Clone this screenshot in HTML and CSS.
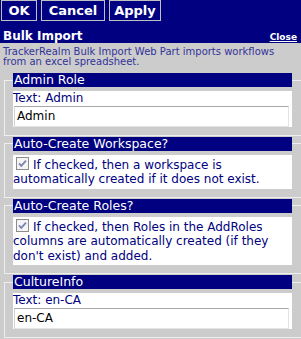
FILE: index.html
```html
<!DOCTYPE html>
<html lang="en">
<head>
  <meta charset="UTF-8">
  <meta name="viewport" content="width=device-width, initial-scale=1.0">
  <title>Bulk Import</title>
  <link rel="stylesheet" href="styles.css">
</head>
<body>
  <div class="web-part">
    <div class="header">
      <div class="toolbar">
        <button class="btn btn-ok">OK</button>
        <button class="btn btn-cancel">Cancel</button>
        <button class="btn btn-apply">Apply</button>
      </div>
      <div class="titlebar">
        <span class="title">Bulk Import</span>
        <a class="close" href="#">Close</a>
      </div>
    </div>

    <p class="desc">TrackerRealm Bulk Import Web Part imports workflows from an excel spreadsheet.</p>

    <fieldset class="prop">
      <legend>Admin Role</legend>
      <div class="prop-body">
        <div class="prop-label">Text: Admin</div>
        <input class="prop-input" type="text" value="Admin">
      </div>
    </fieldset>

    <fieldset class="prop">
      <legend>Auto-Create Workspace?</legend>
      <div class="prop-body prop-check">
        <svg class="check" width="13" height="13" viewBox="0 0 13 13"><rect x="0.5" y="0.5" width="12" height="12" fill="#f4f4f4" stroke="#8c8c8c"/><path d="M3 6.3 L5.3 8.8 L10 3.6" fill="none" stroke="#7b84b4" stroke-width="1.8"/></svg>If checked, then a workspace is automatically created if it does not exist.
      </div>
    </fieldset>

    <fieldset class="prop">
      <legend>Auto-Create Roles?</legend>
      <div class="prop-body prop-check">
        <svg class="check" width="13" height="13" viewBox="0 0 13 13"><rect x="0.5" y="0.5" width="12" height="12" fill="#f4f4f4" stroke="#8c8c8c"/><path d="M3 6.3 L5.3 8.8 L10 3.6" fill="none" stroke="#7b84b4" stroke-width="1.8"/></svg>If checked, then Roles in the AddRoles columns are automatically created (if they don't exist) and added.
      </div>
    </fieldset>

    <fieldset class="prop">
      <legend>CultureInfo</legend>
      <div class="prop-body">
        <div class="prop-label">Text: en-CA</div>
        <input class="prop-input" type="text" value="en-CA">
      </div>
    </fieldset>
  </div>
</body>
</html>
```

FILE: styles.css
```css
body {
  margin: 0;
  padding: 0;
  background: #cccccc;
  font-family: "DejaVu Sans", Verdana, sans-serif;
  overflow: hidden;
}

.header {
  background: #000080;
  height: 43px;
}

.toolbar {
  display: flex;
  gap: 4px;
  padding-left: 1px;
}

.btn {
  height: 21px;
  padding: 0;
  border: 1px solid #c0c0c0;
  background: #000080;
  color: white;
  font-family: "DejaVu Sans", Verdana, sans-serif;
  font-size: 13px;
  font-weight: bold;
}

.btn-ok { width: 36px; }
.btn-cancel { width: 64px; }
.btn-apply { width: 52px; }

.titlebar {
  display: flex;
  justify-content: space-between;
  align-items: baseline;
  padding: 8px 4px 0 3px;
  line-height: 14px;
}

.title {
  color: white;
  font-size: 12px;
  font-weight: bold;
}

.close {
  color: white;
  font-size: 9px;
  font-weight: bold;
}

.desc {
  margin: 0;
  padding: 4px 3px 0;
  font-size: 10px;
  line-height: 10px;
  color: #333399;
  height: 26px;
}

.prop {
  margin: 0 2px 1px 4px;
  padding: 0 10px 8px 8px;
  border: 1px solid #eeeeee;
}

.prop legend {
  width: 279px;
  height: 14px;
  box-sizing: border-box;
  padding: 0 0 0 1px;
  background: #000080;
  color: white;
  font-size: 12.5px;
  line-height: 14px;
}

.prop-body {
  margin-top: 4px;
  background: white;
  color: #000080;
  font-size: 12px;
  line-height: 14.5px;
}

.prop-check {
  padding: 2px 0;
}

.check {
  margin: 0 4px 0 3px;
  vertical-align: -1px;
}

.prop-input {
  display: block;
  box-sizing: border-box;
  width: calc(100% - 4px);
  height: 21px;
  margin: 0 3px 0 1px;
  padding: 0 2px;
  border: 1px solid #e2e4e8;
  border-top-color: #a7a7a7;
  border-left-color: #d4d4d4;
  font-family: "DejaVu Sans", Verdana, sans-serif;
  font-size: 12px;
  color: black;
  outline: none;
}
```
